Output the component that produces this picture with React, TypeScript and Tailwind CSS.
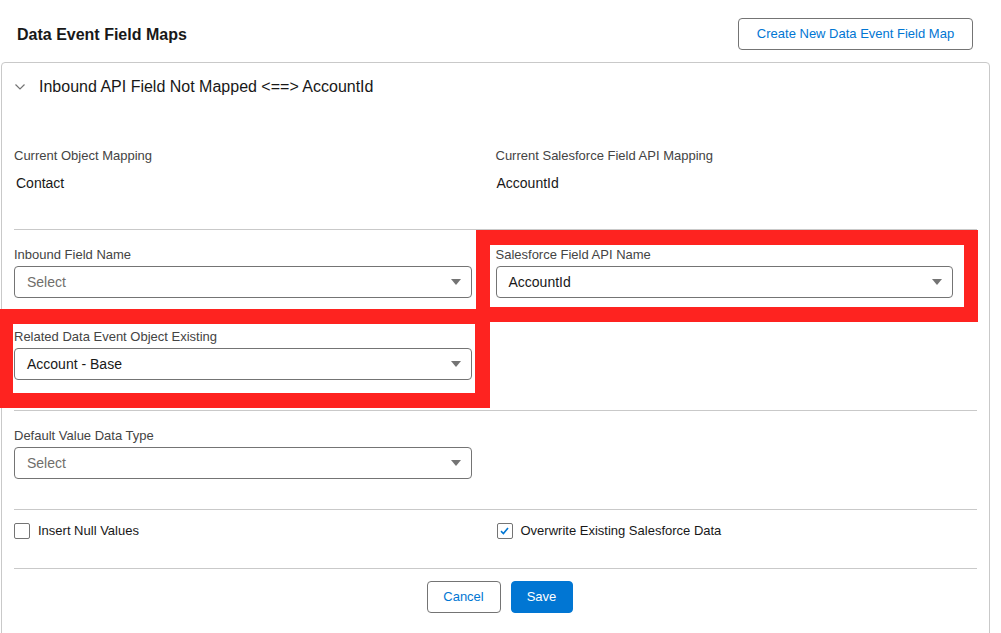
function Chevron() {
  return (
    <svg width="10" height="6" viewBox="0 0 10 6" fill="none" className="ml-[1px]">
      <path d="M0.5 0.5 L5 5 L9.5 0.5" stroke="#747474" strokeWidth="1.2" />
    </svg>
  );
}

function Select({ value, placeholder }: { value?: string; placeholder?: string }) {
  return (
    <div className="flex h-8 w-full items-center justify-between rounded-[4px] border border-[#747474] bg-white pl-[12px] pr-[10px]">
      <span className={value ? "text-[14px] text-[#181818]" : "text-[14px] text-[#706e6b]"}>
        {value ?? placeholder}
      </span>
      <svg width="10" height="6" viewBox="0 0 10 6">
        <path d="M0 0 H10 L5 6 Z" fill="#747474" />
      </svg>
    </div>
  );
}

function Field({ label, value, placeholder }: { label: string; value?: string; placeholder?: string }) {
  return (
    <div className="flex flex-col pr-6">
      <label className="text-[13px] leading-[18px] text-[#444444]">{label}</label>
      <div className="mt-[2px]">
        <Select value={value} placeholder={placeholder} />
      </div>
    </div>
  );
}

function Checkbox({ label, checked }: { label: string; checked?: boolean }) {
  return (
    <div className="flex h-5 items-center">
      <div className="flex h-4 w-4 items-center justify-center rounded-[2px] border border-[#747474] bg-white">
        {checked && (
          <svg width="9" height="8" viewBox="0 0 9 8" fill="none">
            <path d="M1 4.2 L3.4 6.5 L8 1" stroke="#0176d3" strokeWidth="1.6" />
          </svg>
        )}
      </div>
      <span className="ml-[8px] text-[13px] text-[#181818]">{label}</span>
    </div>
  );
}

function Divider({ className }: { className: string }) {
  return <div className={"h-px w-full bg-[#c9c9c9] " + className} />;
}

export default function App() {
  return (
    <div className="relative h-[633px] w-[1001px] overflow-hidden bg-white font-['Liberation_Sans',Arial,sans-serif] text-[#181818]">
      <div className="flex items-center justify-between pl-[17px] pr-[28px] pt-[18px]">
        <h1 className="mt-[2px] text-[16px] font-bold">Data Event Field Maps</h1>
        <button className="h-8 w-[235px] rounded-[4px] border border-[#747474] bg-white text-[13px] text-[#0176d3]">
          Create New Data Event Field Map
        </button>
      </div>

      <div className="ml-[1px] mt-[12px] h-[700px] w-[989px] rounded-[4px] border border-[#c9c9c9] px-[12px] pt-[12px]">
        <div className="flex h-6 items-center">
          <Chevron />
          <span className="ml-[14px] text-[16px]">Inbound API Field Not Mapped &lt;==&gt; AccountId</span>
        </div>

        <div className="mt-[48px] grid grid-cols-2">
          <div className="flex flex-col">
            <span className="text-[13px] leading-[18px] text-[#444444]">Current Object Mapping</span>
            <span className="mt-[8px] pl-[2px] text-[14px] leading-[20px]">Contact</span>
          </div>
          <div className="flex flex-col">
            <span className="text-[13px] leading-[18px] text-[#444444]">Current Salesforce Field API Mapping</span>
            <span className="mt-[8px] pl-[1px] text-[14px] leading-[20px]">AccountId</span>
          </div>
        </div>

        <Divider className="mt-[36px]" />

        <div className="mt-[16px] grid grid-cols-2">
          <Field label="Inbound Field Name" placeholder="Select" />
          <Field label="Salesforce Field API Name" value="AccountId" />
        </div>
        <div className="mt-[30px] grid grid-cols-2">
          <Field label="Related Data Event Object Existing" value="Account - Base" />
          <div />
        </div>

        <Divider className="mt-[30px]" />

        <div className="mt-[16px] grid grid-cols-2">
          <Field label="Default Value Data Type" placeholder="Select" />
          <div />
        </div>

        <Divider className="mt-[30px]" />

        <div className="mt-[11px] grid grid-cols-2">
          <Checkbox label="Insert Null Values" />
          <div className="pl-[1px]">
            <Checkbox label="Overwrite Existing Salesforce Data" checked />
          </div>
        </div>

        <Divider className="mt-[27px]" />

        <div className="mt-[12px] flex justify-center gap-[10px] pl-[8px]">
          <button className="h-8 w-[74px] rounded-[4px] border border-[#747474] bg-white text-[13px] text-[#0176d3]">
            Cancel
          </button>
          <button className="h-8 w-[62px] rounded-[4px] border border-[#0176d3] bg-[#0176d3] text-[13px] text-white">
            Save
          </button>
        </div>
      </div>

      {/* annotation frames */}
      <div className="pointer-events-none absolute left-[476px] top-[230px] h-[92px] w-[502px] border-x-[14px] border-y-[15px] border-[#fe2320]" />
      <div className="pointer-events-none absolute left-0 top-[309px] h-[99px] w-[490px] border-y-[15px] border-l-[13px] border-r-[15px] border-[#fe2320]" />
    </div>
  );
}
